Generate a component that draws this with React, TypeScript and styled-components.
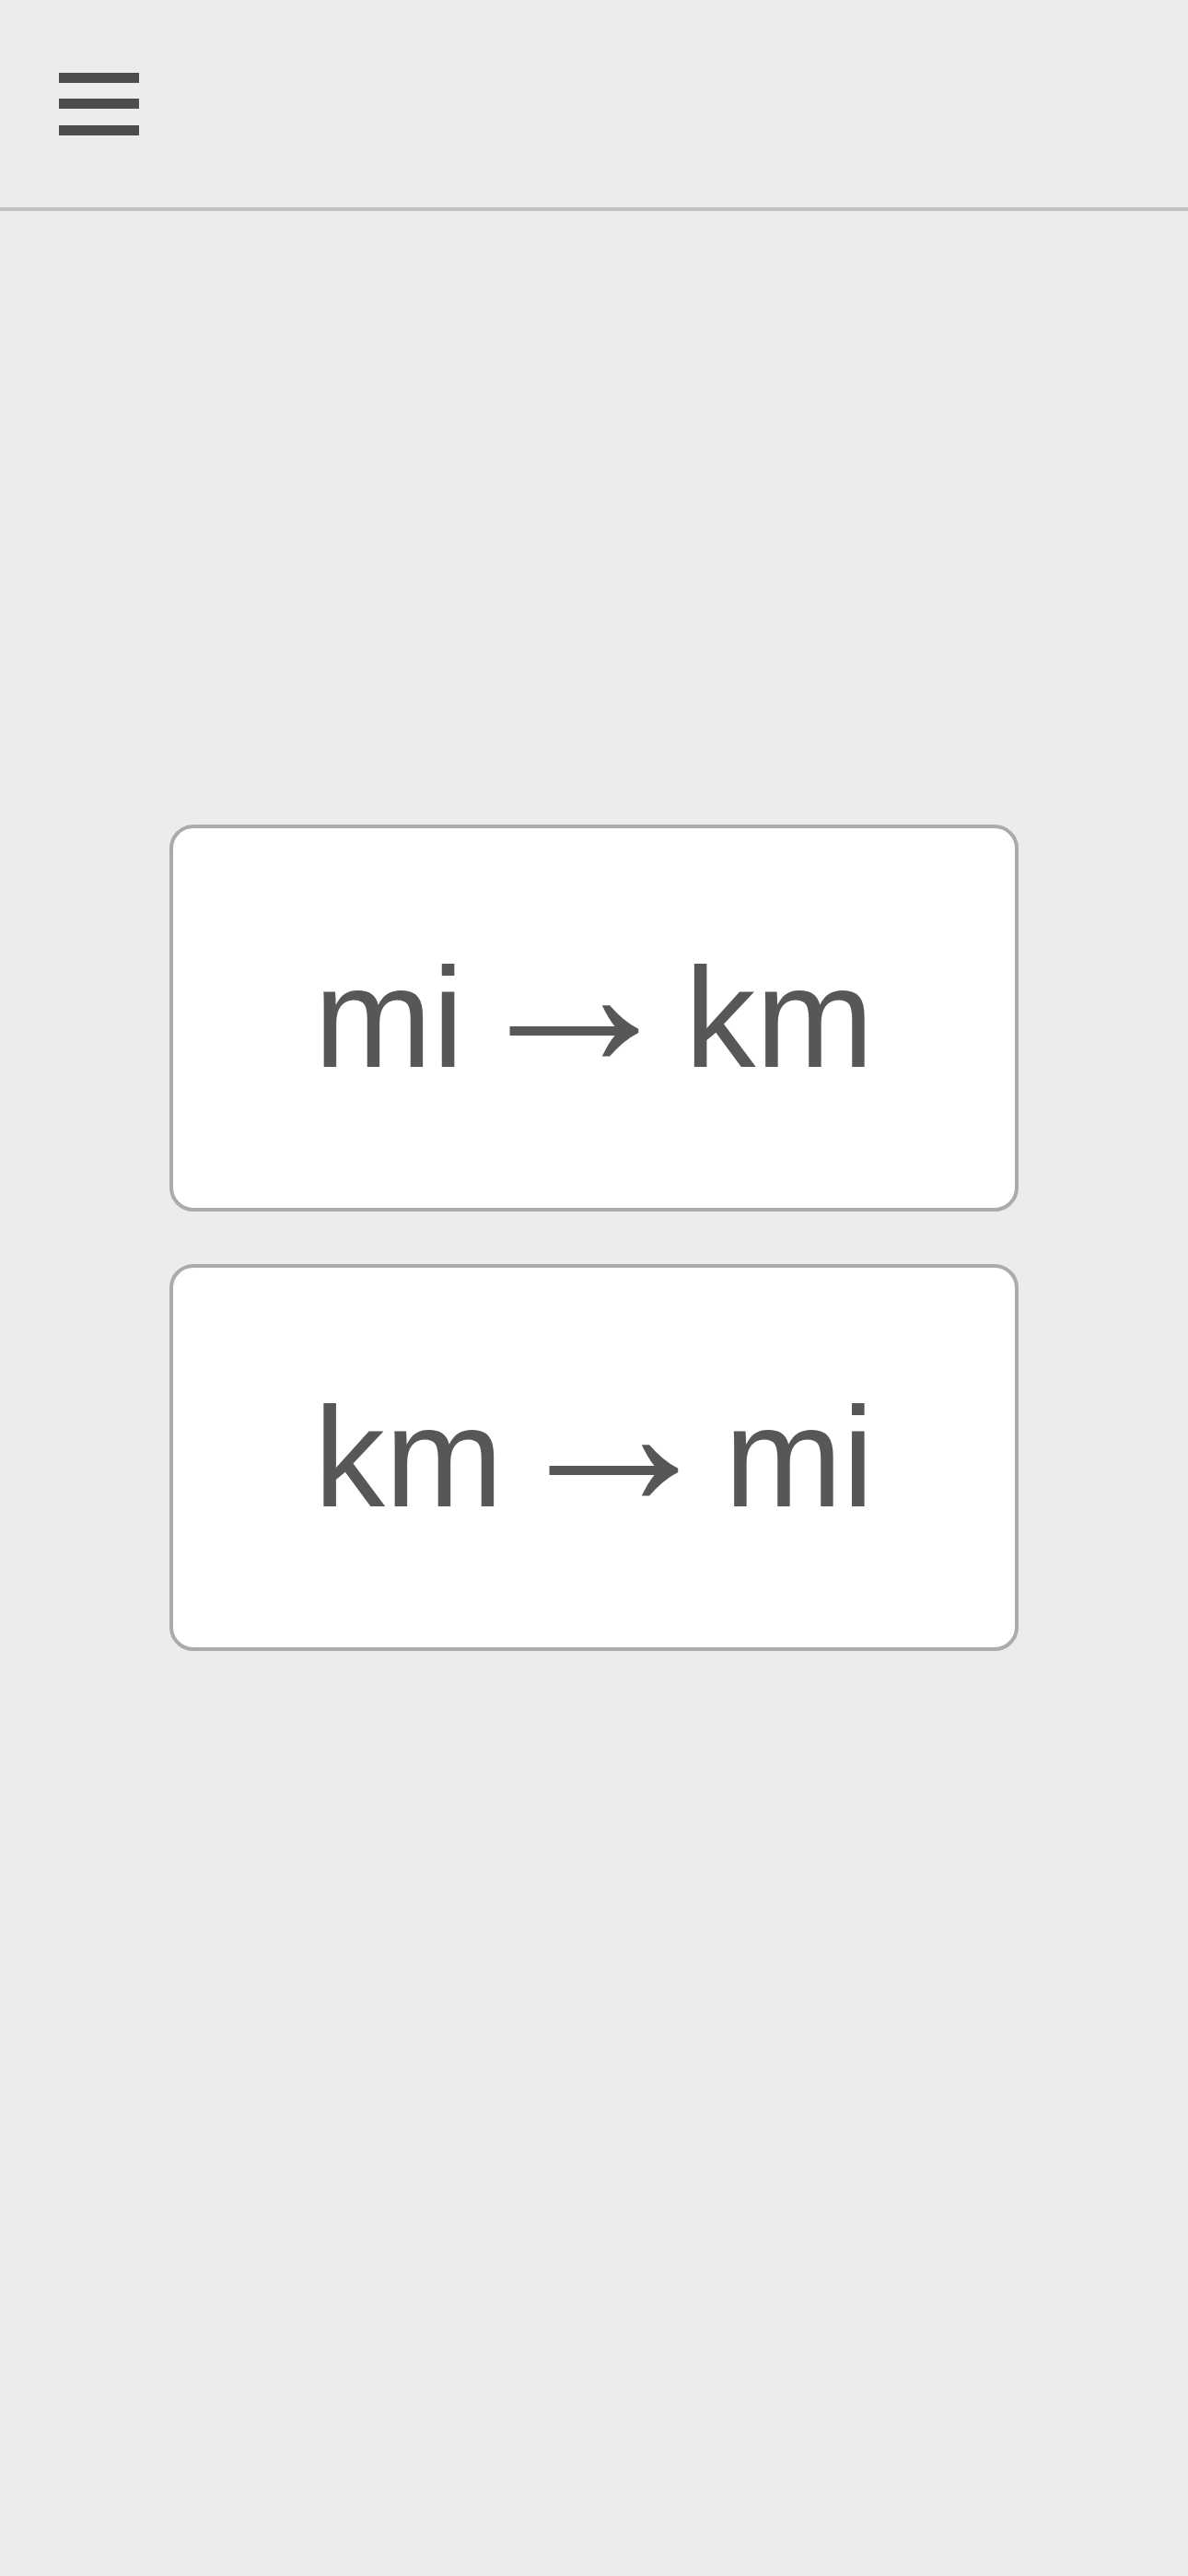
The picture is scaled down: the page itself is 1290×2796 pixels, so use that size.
import React from 'react';
import styled, { createGlobalStyle } from 'styled-components';

const GlobalStyle = createGlobalStyle`
  html, body {
    margin: 0;
    padding: 0;
    background: #edecea;
    font-family: 'Liberation Sans', Arial, sans-serif;
  }
`;

const Page = styled.div`
  min-height: 2796px;
  background: #edecea;
`;

const Header = styled.header`
  height: 225px;
  border-bottom: 4px solid #bfbfbf;
  display: flex;
  align-items: center;
  padding-left: 64px;
`;

const MenuButton = styled.button`
  border: none;
  background: none;
  padding: 0;
  width: 87px;
  display: flex;
  flex-direction: column;
  gap: 17.5px;
  cursor: pointer;
`;

const Bar = styled.span`
  display: block;
  height: 11px;
  background: #4d4d4d;
`;

const Main = styled.main`
  padding: 666px 184px 0;
  display: flex;
  flex-direction: column;
  gap: 57px;
`;

const Card = styled.button`
  height: 420px;
  box-sizing: border-box;
  background: #ffffff;
  border: 4px solid #ababab;
  border-radius: 26px;
  display: flex;
  align-items: center;
  justify-content: center;
  font-family: 'Liberation Sans', Arial, sans-serif;
  font-size: 154px;
  color: #575757;
  padding: 0;
  cursor: pointer;
`;

const Arrow = styled.span`
  font-size: 236px;
  line-height: 0;
  margin: 0 2px;
`;

export default function App() {
  return (
    <Page>
      <GlobalStyle />
      <Header>
        <MenuButton aria-label="menu">
          <Bar />
          <Bar />
          <Bar />
        </MenuButton>
      </Header>
      <Main>
        <Card>
          <span>
            {'mi'}
            <Arrow>→</Arrow>
            {'km'}
          </span>
        </Card>
        <Card>
          <span>
            {'km'}
            <Arrow>→</Arrow>
            {'mi'}
          </span>
        </Card>
      </Main>
    </Page>
  );
}
